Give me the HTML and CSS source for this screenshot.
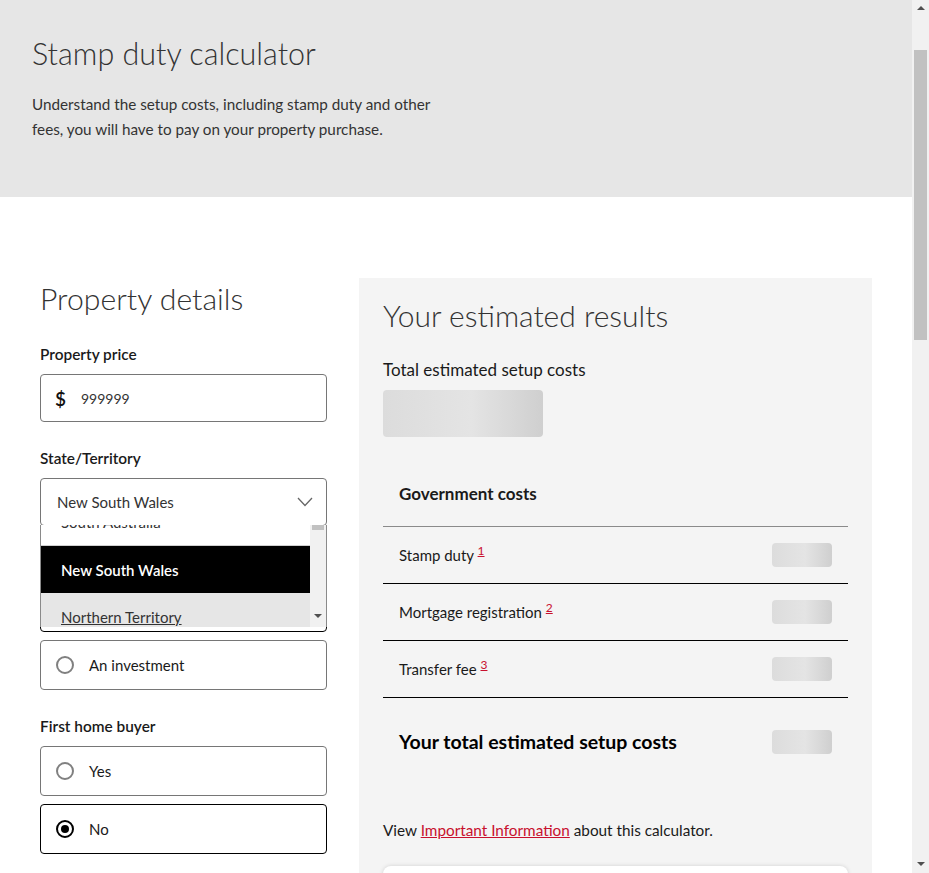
FILE: index.html
```html
<!DOCTYPE html>
<html lang="en">
<head>
<meta charset="utf-8">
<title>Stamp duty calculator</title>
<link rel="stylesheet" href="styles.css">
</head>
<body>
<header class="hero">
  <h1>Stamp duty calculator</h1>
  <p>Understand the setup costs, including stamp duty and other fees, you will have to pay on your property purchase.</p>
</header>

<main class="main">
  <section class="details">
    <h2 class="section-title">Property details</h2>

    <div class="field">
      <label class="field-label">Property price</label>
      <div class="input-box">
        <span class="currency">$</span>
        <span class="input-value">999999</span>
      </div>
    </div>

    <div class="field">
      <label class="field-label">State/Territory</label>
      <div class="select-wrap">
        <div class="select-box">
          <span>New South Wales</span>
          <svg class="chevron" width="16" height="10" viewBox="0 0 16 10"><polyline points="1,1 8,8.5 15,1" fill="none" stroke="#666" stroke-width="1.3"/></svg>
        </div>
        <div class="dropdown">
          <ul class="options">
            <li class="option first">South Australia</li>
            <li class="option selected">New South Wales</li>
            <li class="option hover">Northern Territory</li>
            <li class="option">Queensland</li>
          </ul>
          <div class="dd-scroll">
            <div class="dd-thumb"></div>
            <svg class="dd-arrow" width="8" height="4" viewBox="0 0 8 4"><polygon points="0,0 8,0 4,4" fill="#505050"/></svg>
          </div>
        </div>
      </div>
    </div>

    <div class="field">
      <label class="field-label">Property purpose</label>
      <div class="radio-list">
        <div class="radio-box checked"><span class="radio"></span><span>To live in</span></div>
        <div class="radio-box"><span class="radio"></span><span>An investment</span></div>
      </div>
    </div>

    <div class="field">
      <label class="field-label">First home buyer</label>
      <div class="radio-list">
        <div class="radio-box"><span class="radio"></span><span>Yes</span></div>
        <div class="radio-box checked"><span class="radio"></span><span>No</span></div>
      </div>
    </div>

    <div class="field">
      <label class="field-label">Is the property a new home?</label>
      <div class="radio-list">
        <div class="radio-box"><span class="radio"></span><span>Yes</span></div>
        <div class="radio-box checked"><span class="radio"></span><span>No</span></div>
      </div>
    </div>
  </section>

  <section class="results">
    <h2 class="results-title">Your estimated results</h2>
    <div class="total-label">Total estimated setup costs</div>
    <div class="skeleton skeleton-lg"></div>

    <div class="costs">
      <div class="cost-head">Government costs</div>
      <div class="cost-row">
        <span>Stamp duty <sup><a href="#n1">1</a></sup></span>
        <span class="skeleton skeleton-sm"></span>
      </div>
      <div class="cost-row">
        <span>Mortgage registration <sup><a href="#n2">2</a></sup></span>
        <span class="skeleton skeleton-sm"></span>
      </div>
      <div class="cost-row">
        <span>Transfer fee <sup><a href="#n3">3</a></sup></span>
        <span class="skeleton skeleton-sm"></span>
      </div>
      <div class="cost-total">
        <span>Your total estimated setup costs</span>
        <span class="skeleton skeleton-sm"></span>
      </div>
    </div>

    <p class="info">View <a href="#info">Important Information</a> about this calculator.</p>

    <div class="card">
      <h3>Ready to take the next step?</h3>
      <p>Talk to a home lending specialist about your options and find out how much you could borrow.</p>
      <span class="btn">Contact us</span>
    </div>
  </section>
</main>

<section class="notes" id="info">
  <h2>Important information</h2>
  <p id="n1">1. Stamp duty is calculated based on the property price, the state or territory the property is located in and whether concessions apply.</p>
  <p id="n2">2. Mortgage registration fees are charged by the state or territory government to register the mortgage on the title.</p>
  <p id="n3">3. Transfer fees are charged by the state or territory government to transfer the title of the property to the buyer.</p>
</section>

<div class="scrollbar" aria-hidden="true">
  <svg class="sb-up" width="8" height="4" viewBox="0 0 8 4"><polygon points="4,0 8,4 0,4" fill="#505050"/></svg>
  <div class="sb-thumb"></div>
  <svg class="sb-down" width="8" height="4" viewBox="0 0 8 4"><polygon points="0,0 8,0 4,4" fill="#505050"/></svg>
</div>
</body>
</html>
```

FILE: styles.css
```css
* { box-sizing: border-box; }
html, body { margin: 0; padding: 0; }
body {
  font-family: "Lato", "Liberation Sans", sans-serif;
  color: #1a1a1a;
  background: #fff;
  padding-right: 17px;
}

.hero {
  background: #e6e6e6;
  height: 197px;
  padding: 34px 32px 0;
}
.hero h1 {
  margin: 0;
  font-size: 30.5px;
  font-weight: 300;
  line-height: 38px;
  color: #333;
}
.hero p {
  margin: 20px 0 0;
  width: 410px;
  font-size: 15.25px;
  line-height: 25px;
  color: #333;
}

.main {
  display: grid;
  grid-template-columns: 287px 1fr;
  gap: 32px;
  padding: 81px 40px 80px;
  align-items: start;
}

.section-title {
  margin: 1px 0 25px;
  font-size: 30.2px;
  font-weight: 300;
  line-height: 38px;
  color: #333;
}

.field { margin-bottom: 24px; }
.field-label {
  display: block;
  font-size: 15.4px;
  font-weight: 600;
  line-height: 24px;
  margin-bottom: 8px;
  color: #1a1a1a;
}

.input-box {
  height: 48px;
  border: 1px solid #767676;
  border-radius: 4px;
  display: flex;
  align-items: center;
  padding-left: 14px;
  background: #fff;
}
.currency {
  font-size: 19px;
  font-weight: 600;
  width: 26px;
  color: #111;
}
.input-value { font-size: 14px; color: #333; }

.select-wrap { position: relative; }
.select-box {
  height: 48px;
  border: 1px solid #767676;
  border-radius: 4px;
  display: flex;
  align-items: center;
  justify-content: space-between;
  padding: 0 13px 0 16px;
  font-size: 15px;
  color: #333;
  background: #fff;
}

.dropdown {
  position: absolute;
  top: calc(100% - 1px);
  left: 0;
  width: 100%;
  height: 102px;
  overflow: hidden;
  background: #fff;
  border-left: 1px solid #8a8a8a;
  border-right: 1px solid #8a8a8a;
  z-index: 5;
}
.options {
  list-style: none;
  margin: -28px 16px 0 0;
  padding: 0;
}
.option {
  height: 48px;
  display: flex;
  align-items: center;
  padding-left: 20px;
  font-size: 15px;
  color: #333;
  background: #fff;
}
.option.first { padding-top: 2px; }
.option.selected {
  background: #000;
  color: #fff;
  font-weight: 600;
  border-top: 1px solid #d0d0d0;
  height: 48px;
}
.option.hover {
  background: #e6e6e6;
  text-decoration: underline;
}
.dd-scroll {
  position: absolute;
  top: 0;
  right: 0;
  width: 16px;
  height: 100%;
  background: #f1f1f1;
}
.dd-thumb {
  margin: 0 2px;
  height: 5px;
  background: #c1c1c1;
}
.dd-arrow {
  position: absolute;
  bottom: 9px;
  left: 4px;
}

.radio-list { display: flex; flex-direction: column; gap: 8px; }
.radio-box {
  height: 50px;
  border: 1px solid #767676;
  border-radius: 4px;
  display: flex;
  align-items: center;
  gap: 15px;
  padding-left: 15px;
  font-size: 15px;
  color: #1a1a1a;
  background: #fff;
}
.radio-box.checked { border-color: #000; }
.radio {
  width: 18px;
  height: 18px;
  border-radius: 50%;
  border: 2px solid #808080;
  display: flex;
  align-items: center;
  justify-content: center;
}
.radio-box.checked .radio { border: 2.5px solid #000; }
.radio-box.checked .radio::after {
  content: "";
  width: 8px;
  height: 8px;
  border-radius: 50%;
  background: #000;
}

.results {
  background: #f4f4f4;
  padding: 18px 24px 40px;
}
.results-title {
  margin: 0 0 24px;
  font-size: 30px;
  font-weight: 300;
  line-height: 38px;
  color: #333;
}
.total-label {
  font-size: 17px;
  line-height: 24px;
  color: #1a1a1a;
}
.skeleton {
  display: block;
  border-radius: 4px;
  background: linear-gradient(90deg, #dcdcdc 0%, #e4e4e4 55%, #cfcfcf 100%);
}
.skeleton-lg { width: 160px; height: 47px; margin-top: 8px; }
.skeleton-sm { width: 60px; height: 24px; }

.costs { margin-top: 33px; }
.cost-head {
  padding: 12px 16px 20px;
  font-size: 17px;
  font-weight: 700;
  line-height: 24px;
  border-bottom: 1px solid #8a8a8a;
}
.cost-row {
  display: flex;
  justify-content: space-between;
  align-items: center;
  padding: 16px;
  font-size: 15px;
  line-height: 24px;
  border-bottom: 1px solid #000;
}
.cost-row sup {
  font-size: 12px;
  line-height: 0;
  vertical-align: 6px;
}
.cost-row a, .info a { color: #c8102e; }
.cost-total {
  display: flex;
  justify-content: space-between;
  align-items: center;
  padding: 32px 16px 0;
  font-size: 19.5px;
  font-weight: 700;
  line-height: 24px;
  color: #000;
}

.info {
  margin: 64px 0 24px;
  font-size: 15.3px;
  line-height: 24px;
}

.card {
  background: #fff;
  border-radius: 8px;
  box-shadow: 0 0 4px rgba(0,0,0,0.15);
  padding: 24px;
}
.card h3 { margin: 0 0 12px; font-size: 20px; font-weight: 700; }
.card p { margin: 0 0 20px; font-size: 15px; line-height: 24px; color: #333; }
.btn {
  display: inline-block;
  background: #c8102e;
  color: #fff;
  padding: 12px 24px;
  border-radius: 4px;
  font-weight: 700;
}

.notes {
  padding: 40px 40px 60px;
  max-width: 832px;
}
.notes h2 { font-size: 28px; font-weight: 300; color: #333; margin: 0 0 24px; }
.notes p { font-size: 15px; line-height: 24px; color: #333; margin: 0 0 16px; }

.scrollbar {
  position: fixed;
  top: 0;
  right: 0;
  width: 17px;
  height: 100vh;
  background: #f1f1f1;
  z-index: 20;
}
.sb-up {
  position: absolute;
  top: 6px;
  left: 5px;
}
.sb-thumb {
  position: absolute;
  top: 50px;
  left: 2px;
  width: 13px;
  height: 290px;
  background: #c1c1c1;
}
.sb-down {
  position: absolute;
  bottom: 7px;
  left: 5px;
}
```
